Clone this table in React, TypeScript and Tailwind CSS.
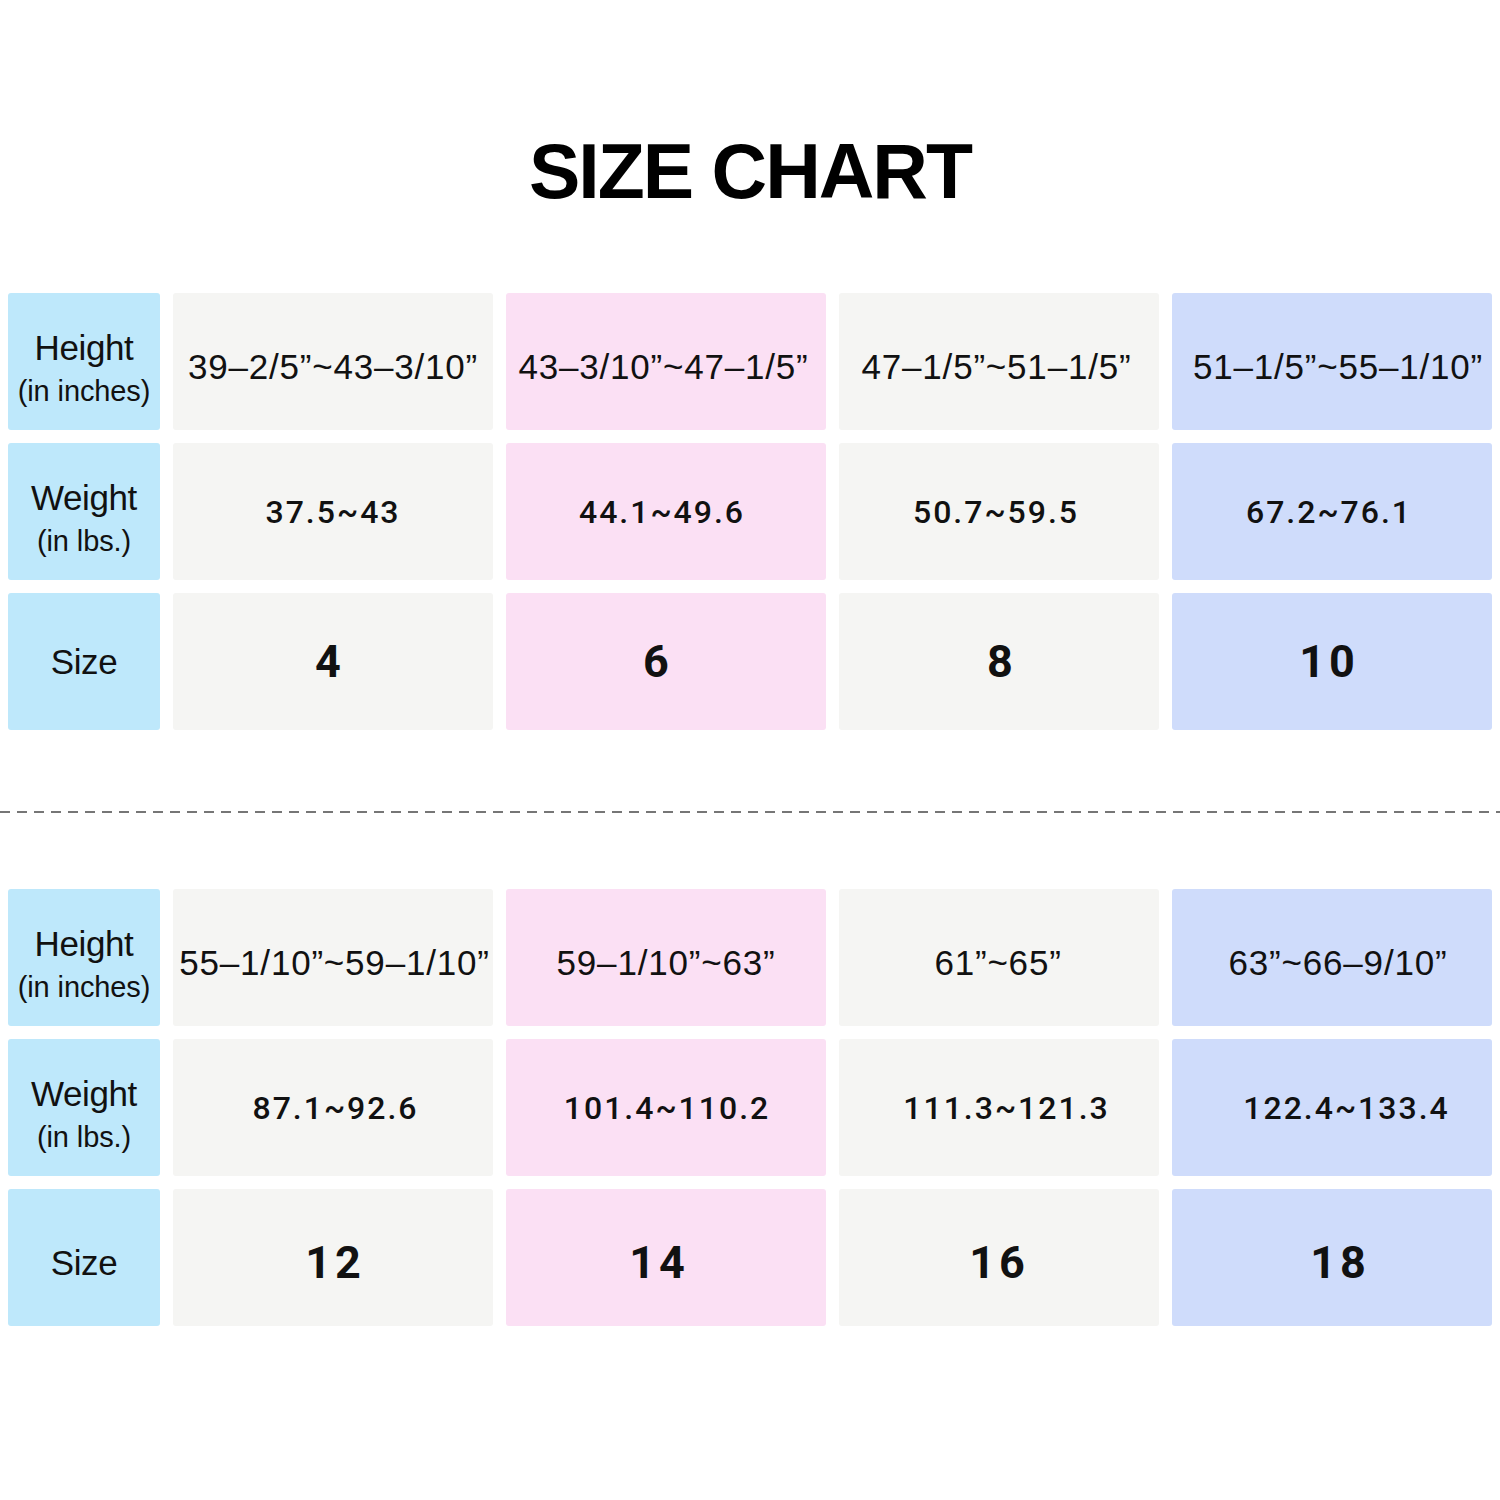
import React from 'react';

type Cell = { text: string; shift?: string };

type Block = {
  heights: Cell[];
  weights: Cell[];
  sizes: Cell[];
  sizePad?: string;
};

const blocks: Block[] = [
  {
    heights: [
      { text: '39–2/5”~43–3/10”' },
      { text: '43–3/10”~47–1/5”', shift: 'pr-[5px]' },
      { text: '47–1/5”~51–1/5”', shift: 'pr-[5px]' },
      { text: '51–1/5”~55–1/10”', shift: 'pl-[12px]' },
    ],
    weights: [
      { text: '37.5~43' },
      { text: '44.1~49.6', shift: 'pr-[8px]' },
      { text: '50.7~59.5', shift: 'pr-[6px]' },
      { text: '67.2~76.1', shift: 'pr-[6px]' },
    ],
    sizes: [
      { text: '4', shift: 'pr-[6px]' },
      { text: '6', shift: 'pr-[16px]' },
      { text: '8', shift: 'pl-[6px]' },
      { text: '10', shift: 'pr-[6px]' },
    ],
  },
  {
    heights: [
      { text: '55–1/10”~59–1/10”', shift: 'pl-[3px]' },
      { text: '59–1/10”~63”' },
      { text: '61”~65”', shift: 'pr-[2px]' },
      { text: '63”~66–9/10”', shift: 'pl-[12px]' },
    ],
    weights: [
      { text: '87.1~92.6', shift: 'pl-[5px]' },
      { text: '101.4~110.2', shift: 'pl-[2px]' },
      { text: '111.3~121.3', shift: 'pl-[15px]' },
      { text: '122.4~133.4', shift: 'pl-[29px]' },
    ],
    sizes: [
      { text: '12', shift: 'pl-[4px]' },
      { text: '14', shift: 'pr-[14px]' },
      { text: '16' },
      { text: '18', shift: 'pl-[16px]' },
    ],
    sizePad: 'pt-[10px]',
  },
];

const colBg = ['bg-[#f5f5f3]', 'bg-[#fbe0f4]', 'bg-[#f5f5f3]', 'bg-[#cfdcfb]'];

function Label({ main, sub, pad }: { main: string; sub?: string; pad?: string }) {
  return (
    <div className={`h-full rounded-[3px] bg-[#bee8fb] flex flex-col items-center justify-center text-[#111] ${sub ? 'pt-[19px]' : ''} ${pad ?? ''}`}>
      <div className="text-[35px] leading-[40px] tracking-[-0.4px]">{main}</div>
      {sub && <div className="text-[29px] leading-[46px] tracking-[-0.1px]">{sub}</div>}
    </div>
  );
}

function ValueRow({ cells, kind, pad }: { cells: Cell[]; kind: 'height' | 'weight' | 'size'; pad?: string }) {
  const textCls =
    kind === 'height'
      ? 'text-[35px] tracking-[0.8px] pt-[12px]'
      : kind === 'weight'
      ? "font-['Roboto',sans-serif] font-medium text-[32px] tracking-[2px]"
      : "font-['Roboto',sans-serif] font-bold text-[45px] tracking-[4px]";
  return (
    <>
      {cells.map((c, i) => (
        <div
          key={i}
          className={`h-full rounded-[3px] flex items-center justify-center text-[#111] whitespace-nowrap ${colBg[i]} ${textCls} ${pad ?? ''} ${c.shift ?? ''}`}
        >
          {c.text}
        </div>
      ))}
    </>
  );
}

function Table({ block }: { block: Block }) {
  return (
    <div className="ml-[8px] grid grid-cols-[152px_320px_320px_320px_320px] grid-rows-[137px_137px_137px] gap-[13px]">
      <Label main="Height" sub="(in inches)" />
      <ValueRow cells={block.heights} kind="height" />
      <Label main="Weight" sub="(in lbs.)" />
      <ValueRow cells={block.weights} kind="weight" />
      <Label main="Size" pad={block.sizePad} />
      <ValueRow cells={block.sizes} kind="size" pad={block.sizePad} />
    </div>
  );
}

export default function App() {
  return (
    <div className="w-[1500px] h-[1500px] bg-white pt-[133px] font-['Liberation_Sans',Arial,sans-serif]">
      <h1 className="text-center text-[77px] leading-none font-bold tracking-[-2px] text-black h-[77px]">SIZE CHART</h1>

      <div className="mt-[83px]">
        <Table block={blocks[0]} />
      </div>

      <div className="mt-[81px] h-[2px] w-full bg-[repeating-linear-gradient(90deg,#767676_0_10px,transparent_10px_17px)]" />

      <div className="mt-[76px]">
        <Table block={blocks[1]} />
      </div>
    </div>
  );
}
